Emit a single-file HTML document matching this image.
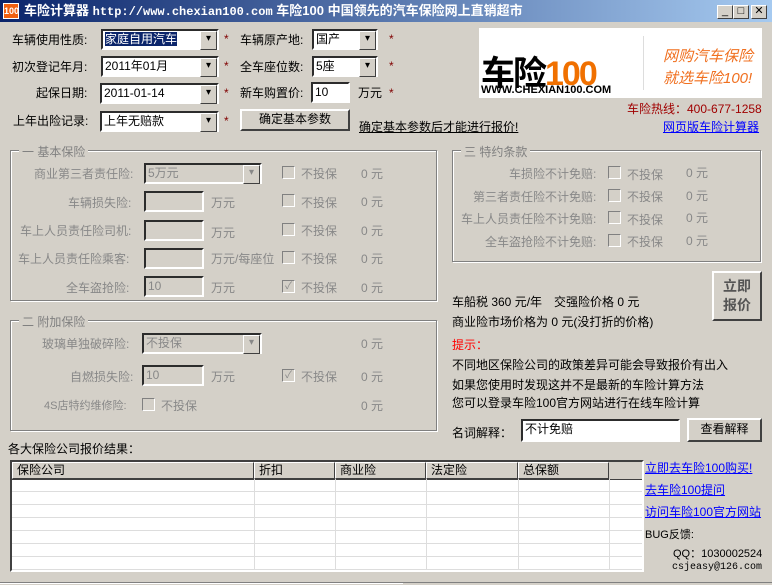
<!DOCTYPE html><html><head><meta charset="utf-8"><style>
*{box-sizing:border-box;margin:0;padding:0}
body{width:772px;height:585px;background:#d4d0c8;font:12px "Liberation Sans","SimSun","Noto Sans CJK SC",sans-serif;position:relative;overflow:hidden;color:#000}
.a{position:absolute;white-space:nowrap}
.title{left:0;top:0;width:772px;height:22px;background:linear-gradient(90deg,#0a246a,#a6caf0);color:#fff;font-weight:bold;font-size:13px;line-height:22px;padding-left:24px}
.tb{position:absolute;top:5px;width:16px;height:14px;background:#d4d0c8;border:1px solid;border-color:#fff #404040 #404040 #fff;color:#000;font-size:11px;line-height:11px;text-align:center}
.combo{position:absolute;height:21px;background:#fff;border:2px inset #808080;border-color:#808080 #fff #fff #808080;padding-left:2px;line-height:16px;font-size:12px}
.combo:after{content:"▾";position:absolute;right:0;top:0;width:15px;height:17px;background:#d4d0c8;border:1px solid;border-color:#fff #404040 #404040 #fff;font-size:10px;line-height:14px;text-align:center}
.inp{position:absolute;height:21px;background:#fff;border:2px inset;border-color:#808080 #fff #fff #808080;padding-left:2px;line-height:16px}
.dis{background:#d4d0c8;color:#888}
.btn{position:absolute;background:#d4d0c8;border:2px solid;border-color:#fff #404040 #404040 #fff;text-align:center}
.star{color:#800000;position:absolute}
.grp{position:absolute;border:1px solid #808080;box-shadow:1px 1px 0 #fff inset,1px 1px 0 #fff}
.gl{position:absolute;top:-8px;left:8px;background:#d4d0c8;padding:0 3px;color:#808080;font-size:12px}
.g{color:#888}
.cb{position:absolute;width:13px;height:13px;border:1px solid;border-color:#808080 #fff #fff #808080;background:#d4d0c8;font-size:10px;line-height:11px;color:#888;text-align:center}
a{color:#00f;text-decoration:underline}
.hd{position:absolute;top:0;height:17px;border:1px solid;border-color:#fff #404040 #404040 #fff;padding-left:4px;line-height:14px;background:#d4d0c8}
.vl{position:absolute;top:17px;width:1px;height:100px;background:#ddd}
</style></head><body>
<div class="a title">车险计算器 <span style="font-family:'Liberation Mono',monospace;font-size:12px">http://www.chexian100.com</span> 车险100 中国领先的汽车保险网上直销超市</div>
<div class="a" style="left:3px;top:3px;width:16px;height:16px;background:#f06010;border:1px solid #fff;color:#fff;font-size:9px;line-height:14px;text-align:center;font-weight:bold">100</div>
<div class="tb" style="left:717px">_</div><div class="tb" style="left:733px">□</div><div class="tb" style="left:751px">✕</div>

<div class="a" style="left:12px;top:31px">车辆使用性质:</div>
<div class="combo" style="left:101px;top:29px;width:118px"><span style="background:#0a246a;color:#fff">家庭自用汽车</span></div><span class="star" style="left:224px;top:32px">*</span>
<div class="a" style="left:240px;top:31px">车辆原产地:</div>
<div class="combo" style="left:312px;top:29px;width:66px">国产</div><span class="star" style="left:389px;top:32px">*</span>
<div class="a" style="left:12px;top:58px">初次登记年月:</div>
<div class="combo" style="left:101px;top:56px;width:118px">2011年01月</div><span class="star" style="left:224px;top:59px">*</span>
<div class="a" style="left:240px;top:58px">全车座位数:</div>
<div class="combo" style="left:312px;top:56px;width:66px">5座</div><span class="star" style="left:389px;top:59px">*</span>
<div class="a" style="left:36px;top:84px">起保日期:</div>
<div class="combo" style="left:100px;top:83px;width:119px">2011-01-14</div><span class="star" style="left:224px;top:86px">*</span>
<div class="a" style="left:240px;top:84px">新车购置价:</div>
<div class="inp" style="left:311px;top:82px;width:39px">10</div>
<div class="a" style="left:358px;top:84px">万元</div><span class="star" style="left:389px;top:86px">*</span>
<div class="a" style="left:13px;top:112px">上年出险记录:</div>
<div class="combo" style="left:100px;top:111px;width:119px">上年无赔款</div><span class="star" style="left:224px;top:114px">*</span>
<div class="btn" style="left:240px;top:109px;width:110px;height:22px;line-height:17px">确定基本参数</div>
<div class="a" style="left:359px;top:118px;text-decoration:underline">确定基本参数后才能进行报价!</div>

<div class="a" style="left:479px;top:28px;width:283px;height:70px;background:#fff;overflow:hidden">
<div class="a" style="left:2px;top:18px;font-size:34px;font-weight:bold;color:#000;letter-spacing:-2px">车险<span style="color:#f07000">100</span></div>
<div class="a" style="left:2px;top:56px;font-size:11px;font-weight:bold">WWW.CHEXIAN100.COM</div>
<div class="a" style="left:164px;top:8px;width:1px;height:54px;background:#ddd"></div>
<div class="a" style="left:184px;top:18px;font-size:15px;color:#f07020;font-style:italic;line-height:22px">网购汽车保险<br>就选车险100!</div>
</div>
<div class="a" style="left:627px;top:100px;color:#a00000">车险热线：400-677-1258</div>
<div class="a" style="left:663px;top:118px"><a>网页版车险计算器</a></div>

<div class="grp" style="left:10px;top:150px;width:427px;height:151px"><span class="gl">一 基本保险</span></div>
<div class="a g" style="left:34px;top:165px">商业第三者责任险:</div>
<div class="combo dis" style="left:144px;top:163px;width:118px;background:#d4d0c8">5万元</div>
<div class="a g" style="left:68px;top:194px">车辆损失险:</div><div class="inp dis" style="left:144px;top:191px;width:60px"></div><div class="a g" style="left:211px;top:194px">万元</div>
<div class="a g" style="left:20px;top:222px">车上人员责任险司机:</div><div class="inp dis" style="left:144px;top:220px;width:60px"></div><div class="a g" style="left:211px;top:224px">万元</div>
<div class="a g" style="left:18px;top:250px">车上人员责任险乘客:</div><div class="inp dis" style="left:144px;top:248px;width:60px"></div><div class="a g" style="left:211px;top:250px">万元/每座位</div>
<div class="a g" style="left:66px;top:279px">全车盗抢险:</div><div class="inp dis" style="left:144px;top:276px;width:60px">10</div><div class="a g" style="left:211px;top:279px">万元</div>
<div class="cb" style="left:282px;top:166px"></div><div class="a g" style="left:301px;top:165px">不投保</div><div class="a g" style="left:361px;top:165px">0 元</div>
<div class="cb" style="left:282px;top:194px"></div><div class="a g" style="left:301px;top:194px">不投保</div><div class="a g" style="left:361px;top:193px">0 元</div>
<div class="cb" style="left:282px;top:223px"></div><div class="a g" style="left:301px;top:222px">不投保</div><div class="a g" style="left:361px;top:222px">0 元</div>
<div class="cb" style="left:282px;top:251px"></div><div class="a g" style="left:301px;top:250px">不投保</div><div class="a g" style="left:361px;top:250px">0 元</div>
<div class="cb" style="left:282px;top:280px">✓</div><div class="a g" style="left:301px;top:279px">不投保</div><div class="a g" style="left:361px;top:279px">0 元</div>

<div class="grp" style="left:10px;top:320px;width:427px;height:111px"><span class="gl">二 附加保险</span></div>
<div class="a g" style="left:42px;top:335px">玻璃单独破碎险:</div>
<div class="combo dis" style="left:142px;top:333px;width:120px;background:#d4d0c8">不投保</div>
<div class="a g" style="left:70px;top:368px">自燃损失险:</div><div class="inp dis" style="left:142px;top:365px;width:62px">10</div><div class="a g" style="left:211px;top:368px">万元</div>
<div class="cb" style="left:282px;top:369px">✓</div><div class="a g" style="left:301px;top:368px">不投保</div>
<div class="a g" style="left:44px;top:397px;font-size:11px">4S店特约维修险:</div><div class="cb" style="left:142px;top:398px"></div><div class="a g" style="left:161px;top:397px">不投保</div>
<div class="a g" style="left:361px;top:335px">0 元</div><div class="a g" style="left:361px;top:368px">0 元</div><div class="a g" style="left:361px;top:397px">0 元</div>

<div class="grp" style="left:452px;top:150px;width:309px;height:112px"><span class="gl">三 特约条款</span></div>
<div class="a g" style="left:509px;top:165px">车损险不计免赔:</div>
<div class="a g" style="left:473px;top:188px">第三者责任险不计免赔:</div>
<div class="a g" style="left:461px;top:210px">车上人员责任险不计免赔:</div>
<div class="a g" style="left:485px;top:233px">全车盗抢险不计免赔:</div>
<div class="cb" style="left:608px;top:166px"></div><div class="a g" style="left:627px;top:166px">不投保</div><div class="a g" style="left:686px;top:164px">0 元</div>
<div class="cb" style="left:608px;top:189px"></div><div class="a g" style="left:627px;top:188px">不投保</div><div class="a g" style="left:686px;top:187px">0 元</div>
<div class="cb" style="left:608px;top:211px"></div><div class="a g" style="left:627px;top:211px">不投保</div><div class="a g" style="left:686px;top:209px">0 元</div>
<div class="cb" style="left:608px;top:234px"></div><div class="a g" style="left:627px;top:233px">不投保</div><div class="a g" style="left:686px;top:232px">0 元</div>

<div class="btn" style="left:712px;top:271px;width:50px;height:50px;font-size:14px;font-weight:bold;color:#555;line-height:19px;padding-top:4px">立即<br>报价</div>
<div class="a" style="left:452px;top:293px">车船税 360 元/年　交强险价格 0 元</div>
<div class="a" style="left:452px;top:313px">商业险市场价格为 0 元(没打折的价格)</div>
<div class="a" style="left:452px;top:336px;color:#f00">提示：</div>
<div class="a" style="left:452px;top:356px">不同地区保险公司的政策差异可能会导致报价有出入</div>
<div class="a" style="left:452px;top:376px">如果您使用时发现这并不是最新的车险计算方法</div>
<div class="a" style="left:452px;top:394px">您可以登录车险100官方网站进行在线车险计算</div>
<div class="a" style="left:452px;top:424px">名词解释：</div>
<div class="inp" style="left:521px;top:419px;width:159px;height:23px">不计免赔</div>
<div class="btn" style="left:687px;top:418px;width:75px;height:24px;line-height:19px">查看解释</div>

<div class="a" style="left:8px;top:440px">各大保险公司报价结果：</div>
<div class="a" style="left:10px;top:460px;width:634px;height:112px;background:#fff;border:2px solid;border-color:#404040 #fff #fff #404040;overflow:hidden">
<div style="position:absolute;left:0;top:17px;width:640px;height:100px;background:repeating-linear-gradient(#fff 0 12px,#ddd 12px 13px)"></div>
<div style="position:absolute;left:0;top:0;width:640px;height:18px;background:#d4d0c8;border-bottom:1px solid #404040"></div>
<div class="hd" style="left:0;width:242px">保险公司</div>
<div class="hd" style="left:242px;width:81px">折扣</div>
<div class="hd" style="left:323px;width:91px">商业险</div>
<div class="hd" style="left:414px;width:92px">法定险</div>
<div class="hd" style="left:506px;width:91px">总保额</div>
<div class="vl" style="left:242px"></div><div class="vl" style="left:323px"></div><div class="vl" style="left:414px"></div><div class="vl" style="left:506px"></div><div class="vl" style="left:597px"></div>
</div>
<div class="a" style="left:645px;top:459px"><a>立即去车险100购买!</a></div>
<div class="a" style="left:645px;top:481px"><a>去车险100提问</a></div>
<div class="a" style="left:645px;top:503px"><a>访问车险100官方网站</a></div>
<div class="a" style="left:645px;top:526px;font-size:11px">BUG反馈:</div>
<div class="a" style="left:673px;top:545px;font-size:11px">QQ：1030002524</div>
<div class="a" style="right:10px;top:562px;font-size:10px;font-family:'Liberation Mono',monospace">csjeasy@126.com</div>
<div class="a" style="left:0;top:582px;width:772px;height:3px;border-top:1px solid #808080;background:#d4d0c8"></div>
<div class="a" style="left:0;top:583px;width:403px;height:2px;border-top:1px solid #fff"></div>
</body></html>
